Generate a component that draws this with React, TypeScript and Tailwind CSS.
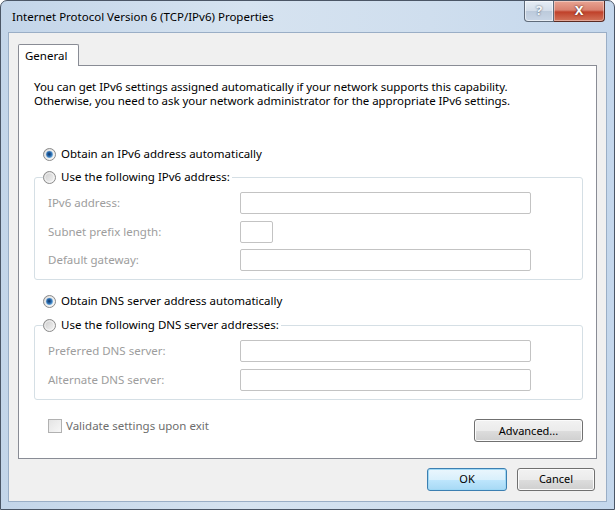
import React from "react"

const FONT = "font-['Noto_Sans','DejaVu_Sans',sans-serif]"

function Radio({ id, checked }: { id: string; checked?: boolean }) {
  return (
    <svg width="13" height="13" viewBox="0 0 13 13" className="shrink-0">
      <defs>
        <linearGradient id={`${id}-b`} x1="0" y1="0" x2="1" y2="1">
          <stop offset="0" stopColor="#c9c9c9" />
          <stop offset="1" stopColor="#f8f8f8" />
        </linearGradient>
        <radialGradient id={`${id}-d`} cx="0.45" cy="0.45" r="0.6">
          <stop offset="0" stopColor="#0f3563" />
          <stop offset="0.55" stopColor="#2a6bb0" />
          <stop offset="1" stopColor="#86c2ec" />
        </radialGradient>
      </defs>
      <circle cx="6.5" cy="6.5" r="6" fill={`url(#${id}-b)`} stroke="#8b8b8b" strokeWidth="1" />
      <circle cx="6.5" cy="6.5" r="4.6" fill="none" stroke="#ffffff" strokeOpacity="0.6" strokeWidth="1" />
      {checked && <circle cx="6.5" cy="6.5" r="3.4" fill={`url(#${id}-d)`} />}
    </svg>
  )
}

function Field({ w = "w-[291px]", mt }: { w?: string; mt: string }) {
  return <div className={`${w} ${mt} h-[22px] rounded-[2px] border border-[#c3c3c3] bg-white`} />
}

function Button({ label, focused, w }: { label: string; focused?: boolean; w: string }) {
  return (
    <div
      className={`${w} h-[23px] rounded-[3px] border flex items-center justify-center text-[11px] text-black ${
        focused
          ? "border-[#3c7fb1] shadow-[inset_0_0_0_1px_#9fd8f5] bg-[linear-gradient(#eaf6fd_0%,#d9f0fc_50%,#bee6fd_51%,#a7d9f5_100%)]"
          : "border-[#707070] shadow-[inset_0_0_0_1px_#fbfbfb] bg-[linear-gradient(#f2f2f2_0%,#ebebeb_50%,#dddddd_51%,#cfcfcf_100%)]"
      }`}
    >
      {label}
    </div>
  )
}

export default function App() {
  return (
    <div className={`w-[615px] h-[510px] bg-white ${FONT}`}>
      <div className="w-full h-full flex flex-col rounded-t-[7px] border border-[#4b5666] bg-[linear-gradient(90deg,#c3d5e9_0%,#d6e3f0_40%,#cfdeee_70%,#c4d7ec_100%)]">
        {/* title bar */}
        <div className="h-[31px] flex items-start shrink-0">
          <span className="pl-[11px] pt-[8px] text-[11.5px] text-black leading-[16px]">
            Internet Protocol Version 6 (TCP/IPv6) Properties
          </span>
          <div className="ml-auto mr-[9px] flex">
            <div className="w-[30px] h-[21px] rounded-bl-[4px] border border-t-0 border-[#5f6b7a] bg-[linear-gradient(#e6edf5_0%,#d3dde9_50%,#bccadb_51%,#c9d6e6_100%)] shadow-[inset_0_0_0_1px_#ffffff90] flex items-center justify-center text-[13px] font-bold text-[#f4f7fa] [text-shadow:0_0_2px_#3b4a5c]">
              ?
            </div>
            <div className="w-[51px] h-[21px] rounded-br-[4px] border border-t-0 border-l-0 border-[#5a2a22] bg-[linear-gradient(#e8a493_0%,#d98270_45%,#c0412a_55%,#d3745a_100%)] shadow-[inset_0_0_0_1px_#ffffff60] flex items-center justify-center text-[13px] font-bold text-white [text-shadow:0_0_2px_#3a0e06]">
              X
            </div>
          </div>
        </div>

        {/* client area */}
        <div className="mx-[7px] mb-[7px] flex-1 border border-[#9aaec6] bg-[#f0f0f0] flex flex-col">
          <div className="pl-[9px] pt-[11px]">
            <div className="relative z-10 w-[61px] h-[22px] -mb-[1px] rounded-tl-[2px] rounded-tr-[2px] border border-b-0 border-[#898c95] bg-white flex items-center pl-[6px] text-[11.5px] text-black">
              General
            </div>
          </div>
          <div className="ml-[9px] mr-[9px] h-[394px] border border-[#898c95] bg-white flex flex-col text-[11.5px] leading-[14px]">
            <p className="pl-[15px] pt-[14px] text-black tracking-[-0.05px]">
              You can get IPv6 settings assigned automatically if your network supports this capability.
              <br />
              Otherwise, you need to ask your network administrator for the appropriate IPv6 settings.
            </p>

            <div className="pl-[15px] pr-[13px] flex flex-col">
              <label className="mt-[38px] h-[16px] pl-[9px] flex items-center gap-[5px] text-black">
                <Radio id="r1" checked />
                Obtain an IPv6 address automatically
              </label>

              <fieldset className="mt-[7px] border border-[#d5dfe5] rounded-[3px] pb-[8px]">
                <legend className="ml-[8px] pr-[2px] h-[16px] flex items-center gap-[5px] text-black">
                  <Radio id="r2" />
                  Use the following IPv6 address:
                </legend>
                <div className="grid grid-cols-[192px_1fr] items-center pl-[13px] text-[#9d9d9d]">
                  <span className="mt-[7px]">IPv6 address:</span>
                  <Field mt="mt-[7px]" />
                  <span className="mt-[7px]">Subnet prefix length:</span>
                  <Field w="w-[33px]" mt="mt-[7px]" />
                  <span className="mt-[6px]">Default gateway:</span>
                  <Field mt="mt-[6px]" />
                </div>
              </fieldset>

              <label className="mt-[13px] h-[16px] pl-[9px] flex items-center gap-[5px] text-black">
                <Radio id="r3" checked />
                Obtain DNS server address automatically
              </label>

              <fieldset className="mt-[8px] border border-[#d5dfe5] rounded-[3px] pb-[8px]">
                <legend className="ml-[8px] pr-[2px] h-[16px] flex items-center gap-[5px] text-black">
                  <Radio id="r4" />
                  Use the following DNS server addresses:
                </legend>
                <div className="grid grid-cols-[192px_1fr] items-center pl-[13px] text-[#9d9d9d]">
                  <span className="mt-[7px]">Preferred DNS server:</span>
                  <Field mt="mt-[7px]" />
                  <span className="mt-[7px]">Alternate DNS server:</span>
                  <Field mt="mt-[7px]" />
                </div>
              </fieldset>

              <div className="mt-[19px] flex items-start">
                <div className="ml-[14px] flex items-center gap-[4px] text-[#6d6d6d] h-[14px]">
                  <div className="w-[14px] h-[14px] border border-[#b1b1b1] bg-[linear-gradient(135deg,#e4e4e4,#f7f7f7)]" />
                  Validate settings upon exit
                </div>
                <div className="ml-auto">
                  <Button label="Advanced..." w="w-[109px]" />
                </div>
              </div>
            </div>
          </div>

          <div className="mt-[9px] pr-[11px] flex justify-end gap-[10px]">
            <Button label="OK" focused w="w-[80px]" />
            <Button label="Cancel" w="w-[78px]" />
          </div>
        </div>
      </div>
    </div>
  )
}
